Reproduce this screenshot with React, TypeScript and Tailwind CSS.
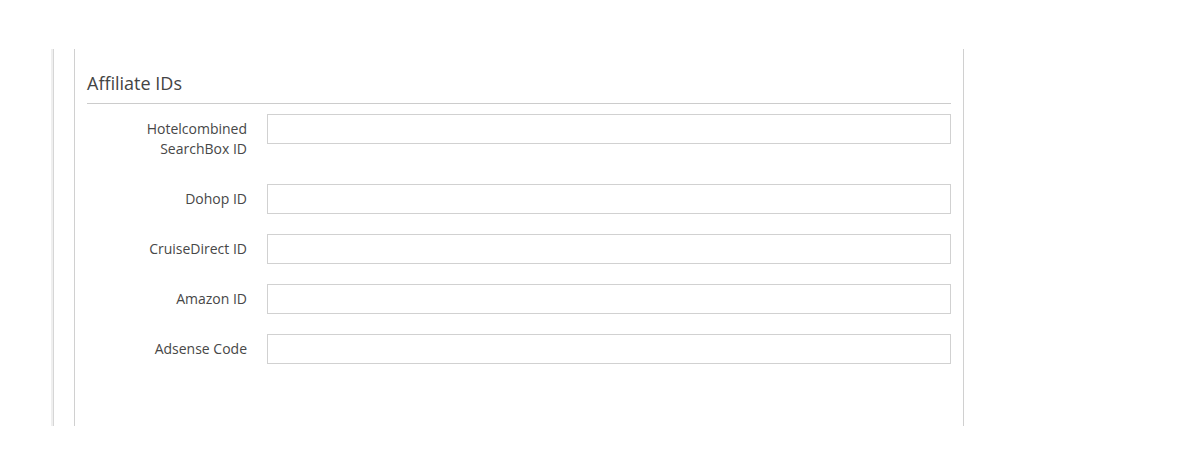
export default function App() {
  const fields = [
    { label: ["Hotelcombined", "SearchBox ID"] },
    { label: ["Dohop ID"] },
    { label: ["CruiseDirect ID"] },
    { label: ["Amazon ID"] },
    { label: ["Adsense Code"] },
  ];

  return (
    <div
      className="w-[1187px] h-[476px] bg-white pt-[49px] pl-[51px]"
      style={{ fontFamily: '"Open Sans", "Liberation Sans", sans-serif' }}
    >
      <div className="flex h-[377px]">
        {/* left rail */}
        <div className="w-[3px] h-full bg-[#efefef] border-r border-[#d6d6d6]"></div>

        {/* panel */}
        <div className="ml-5 w-[890px] h-full border-l border-r border-[#d0d0d0] px-3">
          <h2 className="mt-[21px] pb-[7px] border-b border-[#cccccc] text-[18px] leading-[26px] text-[#444444] font-normal">
            Affiliate IDs
          </h2>

          <div className="mt-[10px] flex flex-col gap-5">
            {fields.map((f, i) => (
              <div key={i} className="flex items-start">
                <label className="w-[160px] shrink-0 text-right text-[14px] leading-[20px] text-[#474747] pt-[5px] pb-[5px]">
                  {f.label.map((l, j) => (
                    <div key={j}>{l}</div>
                  ))}
                </label>
                <input
                  type="text"
                  className="ml-5 flex-1 h-[30px] border border-[#d1d1d1] bg-white outline-none px-2 text-[14px]"
                />
              </div>
            ))}
          </div>
        </div>
      </div>
    </div>
  );
}
